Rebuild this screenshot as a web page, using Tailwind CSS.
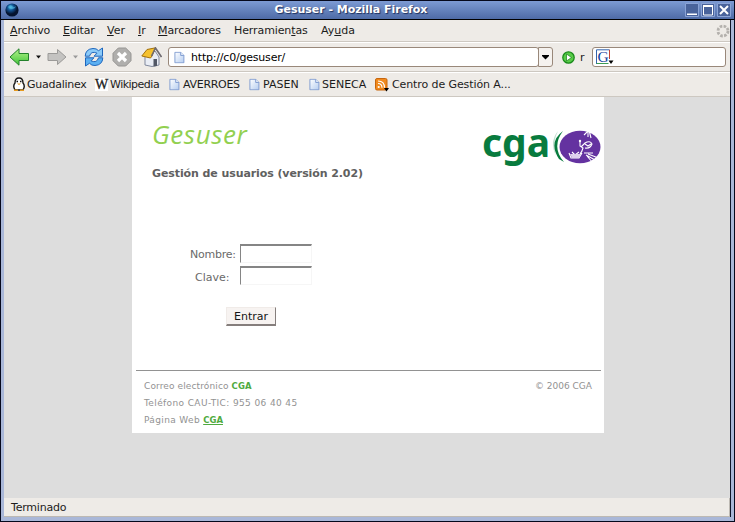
<!DOCTYPE html>
<html lang="es">
<head>
<meta charset="utf-8">
<title>Gesuser - Mozilla Firefox</title>
<script src="https://cdn.jsdelivr.net/npm/@tailwindcss/browser@4"></script>
</head>
<body class="w-[735px] h-[522px] overflow-hidden bg-black font-['DejaVu_Sans',sans-serif] text-[11px] text-[#1c1c1c] whitespace-nowrap">
<svg class="absolute w-0 h-0">
  <defs>
    <linearGradient id="gg" x2="0" y2="1"><stop stop-color="#b6f38c"/><stop offset="1" stop-color="#3fc437"/></linearGradient>
    <linearGradient id="pg" x2="1" y2="1"><stop stop-color="#fff"/><stop offset="1" stop-color="#b5cdf0"/></linearGradient>
    <radialGradient id="globe" cx=".4" cy=".3"><stop stop-color="#3fb4e0"/><stop offset=".5" stop-color="#11508f"/><stop offset="1" stop-color="#04132f"/></radialGradient>
    <symbol id="page" viewBox="0 0 12 13"><path d="M1 .8h6.3l3.500 3.500v8H1z" fill="url(#pg)" stroke="#7b98cf"/><path d="M7.300.8v3.500h3.500" fill="#e9f0fb" stroke="#7b98cf"/></symbol>
  </defs>
</svg>
<div class="w-[735px] h-[522px] flex flex-col border border-[#05081c] bg-[#a9b7d8]">
  <header class="h-[19px] shrink-0 flex items-center border-b border-black bg-linear-to-b from-[#7d9bd4] to-[#4e6ba6]">
    <svg class="w-[14px] h-[14px] ml-[4px]" viewBox="0 0 14 14"><circle cx="7" cy="7" r="6.600" fill="url(#globe)"/><path d="M3 4q2-3 4-1t4 0q-1 3-4 3T3 4" fill="#5cc5e8" opacity=".55"/></svg>
    <div class="flex-1 pr-[2px] pt-px text-center text-[11px] tracking-[-0.03px] font-bold text-white [text-shadow:1px_1px_1px_#1d2f5c]">Gesuser - Mozilla Firefox</div>
    <div class="flex gap-[2px] mr-[3px]">
      <svg class="w-[14px] h-[14px]" viewBox="0 0 14 14"><path d="M.5.5h13v13H.5z" fill="#49639b" stroke="#8aa3d6"/><path d="M2 10.500h10v1.500H2z" fill="#fff"/></svg>
      <svg class="w-[14px] h-[14px]" viewBox="0 0 14 14"><path d="M.5.5h13v13H.5z" fill="#49639b" stroke="#8aa3d6"/><path d="M2.500 12V3h9v9z" fill="none" stroke="#fff"/><path d="M2 2h10v2H2z" fill="#fff"/></svg>
      <svg class="w-[14px] h-[14px]" viewBox="0 0 14 14"><path d="M.5.5h13v13H.5z" fill="#49639b" stroke="#8aa3d6"/><path d="m3 3 8 8m0-8-8 8" stroke="#fff" stroke-width="2"/></svg>
    </div>
  </header>
  <div class="flex-1 min-h-0 ml-[3px] mr-[3px] mb-[4px] flex flex-col border-r border-[#10152b] bg-[#eeebe7]">
    <nav class="h-[22px] shrink-0 flex items-center pl-[6px] pt-[2px] border-b border-[#cdc8c1]">
      <span class="w-[53px] tracking-[-0.15px]"><u>A</u>rchivo</span><span class="w-[44px] tracking-[-0.15px]"><u>E</u>ditar</span><span class="w-[31px]"><u>V</u>er</span><span class="w-[20px]"><u>I</u>r</span><span class="w-[76px] tracking-[-0.1px]"><u>M</u>arcadores</span><span class="w-[87px] tracking-[-0.1px]">Herramien<u>t</u>as</span><span>Ay<u>u</u>da</span>
      <svg class="w-[14px] h-[14px] ml-auto -mt-[2px]" viewBox="0 0 14 14"><circle cx="7" cy="7" r="5" fill="none" stroke="#b4b1ad" stroke-width="2.800" stroke-dasharray="2.600 1.327"/></svg>
    </nav>
    <div class="h-[30px] shrink-0 flex items-center pl-[5px] border-t border-white border-b border-b-[#cdc8c1]">
      <svg class="w-[21px] h-[20px]" viewBox="0 0 21 20"><path d="M1 10 10 1.800v4.700h9.500v7H10v4.700z" fill="url(#gg)" stroke="#23812b"/></svg>
      <svg class="w-[5px] h-[4px] ml-[6px]" viewBox="0 0 5 4"><path d="M0 .5h5L2.500 3.500z" fill="#111"/></svg>
      <svg class="w-[20px] h-[20px] ml-[6px]" viewBox="0 0 20 20"><path d="M19 10 10.500 2.500v4H1v7h9.500v4z" fill="#c4c3c1" stroke="#9b9a98"/></svg>
      <svg class="w-[5px] h-[4px] ml-[6px]" viewBox="0 0 5 4"><path d="M0 .5h5L2.500 3.500z" fill="#999"/></svg>
      <svg class="w-[20px] h-[20px] ml-[6px]" viewBox="0 0 20 20"><path d="M1.200 9.200Q1.500 2 9 1.500q3.500-.2 5.500 2.200L18.500 1v8.200H10l3-3Q7 3.500 5.500 9.200z" fill="#8bcaf8" stroke="#1d66bd"/><path d="M18.800 10.800Q18.500 18 11 18.500q-3.500.2-5.500-2.200L1.500 19v-8.200H10l-3 3q6 2.700 7.500-3z" fill="#5cb0f2" stroke="#1d66bd"/></svg>
      <svg class="w-[20px] h-[20px] ml-[8px]" viewBox="0 0 20 20"><path d="M6.300 1h7.400L19 6.300v7.400L13.700 19H6.300L1 13.700V6.300z" fill="#b0afad" stroke="#979694"/><path d="m6 6 8 8m0-8-8 8" stroke="#fff" stroke-width="3.200"/></svg>
      <svg class="w-[21px] h-[20px] ml-[9px]" viewBox="0 0 21 20"><path d="M4 8.500V18l7 1.500 7-1.500V10l-4-6z" fill="#e9edf5" stroke="#81899d"/><path d="M.8 9 6 2.500 14.500.8 11 9 9.500 11z" fill="#f5c12e" stroke="#a2700d"/><path d="m10.500 9 4-8 6 9" fill="none" stroke="#6e6a70" stroke-width="1.600"/><path d="M12.500 12h3.500v7l-3.500.5z" fill="#525866"/></svg>
      <div class="ml-[6px] w-[371px] h-[20px] flex items-center border border-[#99887a] rounded-[3px] bg-white pl-[5px] shrink-0">
        <svg class="w-[11px] h-[13px] shrink-0" viewBox="0 0 12 13"><use href="#page"/></svg>
        <span class="ml-[6px] pt-[2px] text-black tracking-[-0.2px]">http://c0/gesuser/</span>
      </div>
      <div class="-ml-px w-[15px] h-[20px] shrink-0 flex items-center justify-center border border-[#99887a] rounded-r-[3px] bg-[#f5f2ef]"><svg class="w-[7px] h-[5px]" viewBox="0 0 7 5"><path d="M0 0h7v1L3.500 4.500 0 1z"/></svg></div>
      <svg class="w-[13px] h-[13px] ml-[9px]" viewBox="0 0 13 13"><circle cx="6.500" cy="6.500" r="5.700" fill="#58cc48" stroke="#1b8a1c" stroke-width="1.300"/><path d="M4.500 3v7l5-3.500z" fill="#fff" stroke="#187d19" stroke-width=".7"/></svg>
      <span class="ml-[5px] pt-[2px]">r</span>
      <div class="ml-auto mr-[4px] w-[134px] h-[20px] flex items-center border border-[#99887a] rounded-[3px] bg-white pl-[3px]">
        <svg class="w-[18px] h-[16px]" viewBox="0 0 18 16"><path d="M.5 15V.8h13" fill="none" stroke="#3565ad"/><path d="M13.500.8V10" stroke="#c34435"/><path d="M.5 14.500h12" stroke="#3b9b55"/><text x="1.500" y="12.800" font-family="Liberation Serif, serif" font-size="15.500" fill="#1746a0">G</text><path d="M12.500 11.500h5L15 15z"/></svg>
      </div>
    </div>
    <div class="h-[25px] shrink-0 flex items-center border-t border-white border-b border-b-[#cdc8c1] pl-[8px]">
      <svg class="w-[14px] h-[15px]" viewBox="0 0 14 15"><path d="M3 13Q.5 9 3 6q0-5 4-5t4 5q2.500 3 0 7z" fill="#fff" stroke="#161616" stroke-width="1.400"/><path d="M4.500 4.500h1.500m2 0h1.500" stroke="#111" stroke-width="1.500"/><path d="m5 6.500 2 1.500 2-1.500zM2 12.500h4v1.500H2zm6 0h4v1.500H8z" fill="#e59a20"/></svg>
      <span class="w-[69px] pl-px pt-px tracking-[-0.25px]">Guadalinex</span>
      <span class="w-[13px] h-[13px] bg-white font-['Liberation_Serif',serif] text-[14px] leading-[13px] tracking-[-1px] [-webkit-text-stroke:0.3px_#1c1c1c]">W</span>
      <span class="w-[61px] pl-[2px] pt-px tracking-[-0.5px]">Wikipedia</span>
      <svg class="w-[11px] h-[13px]" viewBox="0 0 12 13"><use href="#page"/></svg><span class="w-[69px] pl-[3px] pt-px tracking-[-0.3px]">AVERROES</span>
      <svg class="w-[11px] h-[13px]" viewBox="0 0 12 13"><use href="#page"/></svg><span class="w-[49px] pl-[3px] pt-px">PASEN</span>
      <svg class="w-[11px] h-[13px]" viewBox="0 0 12 13"><use href="#page"/></svg><span class="w-[55px] pl-[2px] pt-px">SENECA</span>
      <svg class="w-[14px] h-[14px]" viewBox="0 0 14 14"><rect x=".5" y=".5" width="11.500" height="11.500" rx="1.500" fill="#f08a1e" stroke="#c8660d"/><path d="M3 5.500Q7 5.500 7 9.800M3 3Q9.500 3 9.500 9.800" fill="none" stroke="#fff" stroke-width="1.200"/><circle cx="3.700" cy="9" r="1.100" fill="#fff"/><path d="M9 10h5l-2.500 3.500z"/></svg>
      <span class="pl-[3px] pt-px tracking-[-0.1px]">Centro de Gestión A...</span>
    </div>
    <main class="flex-1 min-h-0 bg-[#dddddd] flex">
      <section class="ml-[128px] w-[472px] h-[336px] bg-white flex flex-col text-[#6a6a6a]">
        <div class="h-[66px] flex justify-between pl-[20px] pt-[20px]">
          <h1 class="-mt-px font-['Open_Sans',sans-serif] font-medium italic text-[26px] tracking-[0.6px] leading-[36px] text-[#92d050]">Gesuser</h1>
          <div class="flex w-[122px] pt-[2px]">
            <span class="w-[70px] -mt-px font-['Noto_Sans',sans-serif] text-[39px] leading-[48px] font-bold text-[#087b3e]">cga</span>
            <svg class="w-[52px] h-[50px]" viewBox="0 0 52 50"><path d="M11 12Q-4 23 7 40L12 43Q-1 28 11 12" fill="#087b3e"/><path d="M6 12Q-3 23 4 37 0 24 6 12" fill="#087b3e" opacity=".25"/><ellipse cx="28" cy="28" rx="20.500" ry="16.300" fill="#6432a0"/><g fill="none" stroke="#fff" stroke-width="1.100"><path d="m32 16 4-4v6m1-7 2 8m0-10-1 4M28 22v5l3 2q-1 4-3 6M29 28l4-4q5-3 7 1-2 5-7 4m0-4 3 2 3-2M32 34h9m-7 2 11 6m-9-7 13 5m-14-3 6 7M17 34l2 5h8l3-5m-10-1 3 3 4-3"/></g><path d="M18 35h11l-2 4h-7z" fill="#dfd0ee"/><circle cx="28" cy="22" r="1.200" fill="#fff"/></svg>
          </div>
        </div>
        <h2 class="pl-[20px] mt-[4px] text-[11px] leading-[14px] font-bold tracking-[-0.09px] text-[#606060]">Gestión de usuarios (versión 2.02)</h2>
        <form class="mt-[63px] flex flex-col" onsubmit="return false">
          <div class="flex h-[22px]"><label class="w-[108px] pl-[58px] pt-[4px] leading-[14px] tracking-[-0.25px]">Nombre:</label><input aria-label="Nombre" class="w-[72px] h-[19px] border-t-2 border-l border-[#858585] border-r border-b border-r-[#f6f6f6] border-b-[#f6f6f6]"></div>
          <div class="flex h-[22px]"><label class="w-[108px] pl-[63px] pt-[5px] leading-[14px]">Clave:</label><input type="password" aria-label="Clave" class="w-[72px] h-[19px] border-t-2 border-l border-[#858585] border-r border-b border-r-[#f6f6f6] border-b-[#f6f6f6]"></div>
          <button class="ml-[94px] mt-[19px] w-[50px] h-[19px] leading-[15px] pt-px bg-[#f7f3f1] text-[#151515] border-t border-l border-[#f0ebe8] border-r border-b-2 border-r-[#857e7c] border-b-[#857e7c]">Entrar</button>
        </form>
        <footer class="ml-[4px] mr-[3px] mt-auto h-[63px] border-t border-[#929292] pl-[8px] pr-[9px] pt-[7px] flex justify-between text-[9px] leading-[17px] text-[#929292]">
          <div>
            <p class="tracking-[0.12px]">Correo electrónico <b class="text-[#4faa40] text-[8.500px]">CGA</b></p>
            <p class="tracking-[0.38px]">Teléfono CAU-TIC: 955 06 40 45</p>
            <p class="tracking-[0.35px]">Página Web <b class="text-[#4faa40] underline text-[8.500px] tracking-[0px]">CGA</b></p>
          </div>
          <p>© 2006 CGA</p>
        </footer>
      </section>
    </main>
    <div class="h-[19px] shrink-0 flex items-center pl-[7px] pt-[2px] tracking-[-0.2px] border-r border-b border-[#bdb9b3]">Terminado</div>
  </div>
</div>
</body>
</html>
